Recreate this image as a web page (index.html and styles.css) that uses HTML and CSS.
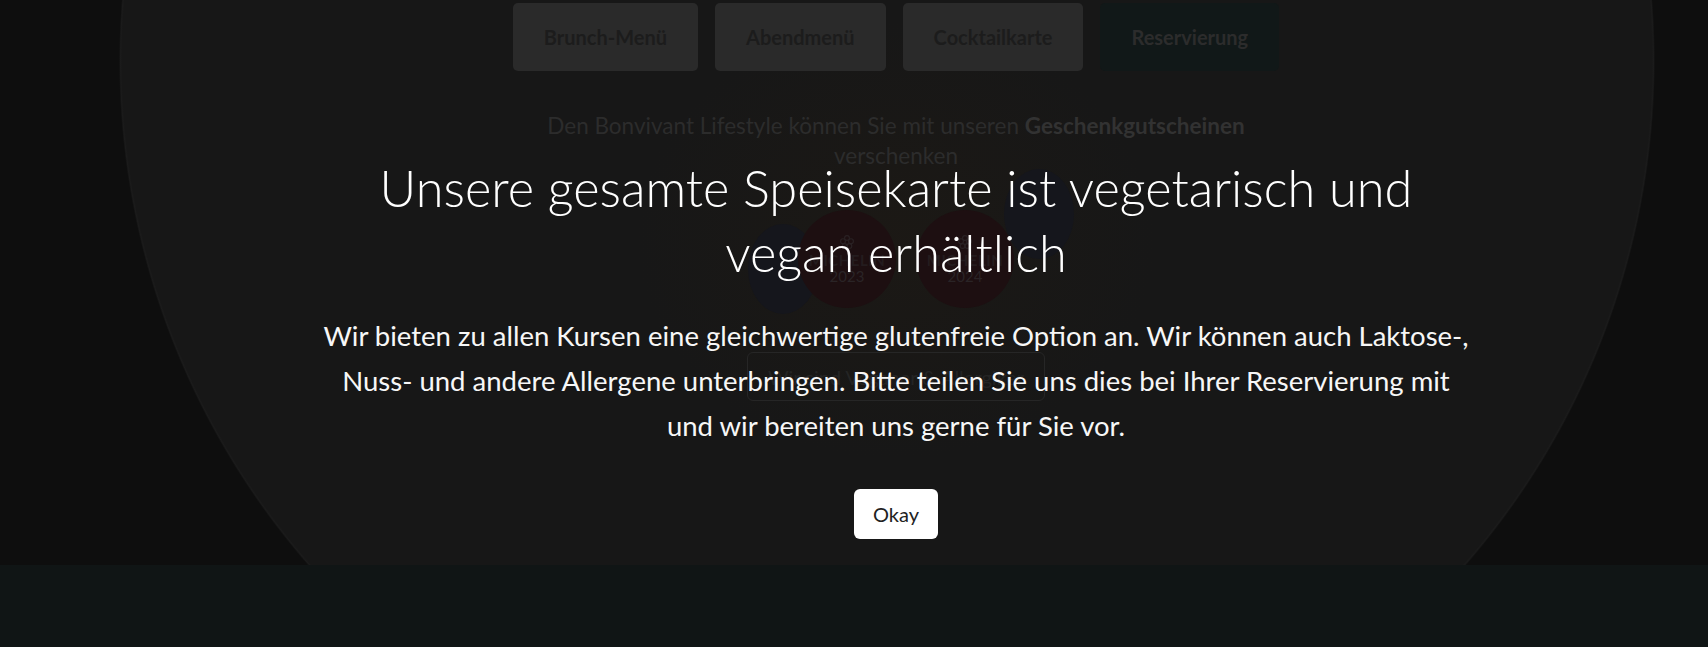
FILE: index.html
```html
<!DOCTYPE html>
<html lang="de">
<head>
<meta charset="utf-8">
<title>Bonvivant</title>
<link rel="stylesheet" href="styles.css">
</head>
<body>
<div class="page">
  <section class="hero">
    <nav class="menu-nav">
      <a class="menu-btn">Brunch-Menü</a>
      <a class="menu-btn">Abendmenü</a>
      <a class="menu-btn">Cocktailkarte</a>
      <a class="menu-btn menu-btn--accent">Reservierung</a>
    </nav>
    <p class="gift">Den Bonvivant Lifestyle können Sie mit unseren <strong>Geschenkgutscheinen</strong><br>verschenken</p>
    <div class="badges">
      <span class="blob blob--left"></span>
      <div class="badge">
        <svg class="badge-star" viewBox="0 0 20 20" width="16" height="16"><g fill="none" stroke="currentColor" stroke-width="1.4"><circle cx="10" cy="5" r="3"/><circle cx="5" cy="9" r="3"/><circle cx="15" cy="9" r="3"/><circle cx="7" cy="15" r="3"/><circle cx="13" cy="15" r="3"/></g></svg>
        <span class="badge-name">MICHELIN</span>
        <span class="badge-year">2023</span>
      </div>
      <div class="badge">
        <svg class="badge-star" viewBox="0 0 20 20" width="16" height="16"><g fill="none" stroke="currentColor" stroke-width="1.4"><circle cx="10" cy="5" r="3"/><circle cx="5" cy="9" r="3"/><circle cx="15" cy="9" r="3"/><circle cx="7" cy="15" r="3"/><circle cx="13" cy="15" r="3"/></g></svg>
        <span class="badge-name">MICHELIN</span>
        <span class="badge-year">2024</span>
      </div>
      <span class="blob blob--right"></span>
    </div>
    <div class="notice">Wir sind Veganer &amp; Allergiker</div>
  </section>
  <footer class="band"></footer>

  <div class="overlay">
    <div class="modal">
      <h2 class="modal-title">Unsere gesamte Speisekarte ist vegetarisch und vegan erhältlich</h2>
      <p class="modal-text">Wir bieten zu allen Kursen eine gleichwertige glutenfreie Option an. Wir können auch Laktose-, Nuss- und andere Allergene unterbringen. Bitte teilen Sie uns dies bei Ihrer Reservierung mit und wir bereiten uns gerne für Sie vor.</p>
      <button class="modal-btn">Okay</button>
    </div>
  </div>
</div>
</body>
</html>
```

FILE: styles.css
```css
* { box-sizing: border-box; }
html, body { margin: 0; padding: 0; }
body {
  background: #101515;
  font-family: "Lato", "Noto Sans", sans-serif;
  overflow: hidden;
}
.page {
  position: relative;
  width: 1708px;
  height: 647px;
}
.hero {
  height: 565px;
  padding: 3px 0 0 84px;
  display: flex;
  flex-direction: column;
  align-items: center;
  background:
    radial-gradient(ellipse 260px 220px at 896px 240px, rgba(38, 28, 16, 0.3), rgba(38, 28, 16, 0) 100%),
    radial-gradient(circle 768px at 887px 61px, #171717 99.6%, #1b1b1b 99.8%, #0e0e0e 100%);
  background-color: #0e0e0e;
}
.menu-nav {
  display: flex;
  gap: 17px;
}
.menu-btn {
  height: 68px;
  padding: 0 31px;
  display: flex;
  align-items: center;
  justify-content: center;
  background: #2a2a2a;
  color: #1c1c1c;
  border-radius: 5px;
  font-size: 20px;
  font-weight: 700;
}
.menu-btn--accent {
  background: #111818;
  color: #2c2c2c;
}
.gift {
  margin: 40px 0 0;
  text-align: center;
  color: #2c2c2c;
  font-size: 22.5px;
  line-height: 30px;
}
.gift strong { color: #323232; }
.badges {
  display: flex;
  align-items: center;
  gap: 20px;
  margin-top: 33px;
  padding-left: 30px;
}
.blob {
  width: 70px;
  height: 90px;
  border-radius: 50%;
  background: #15161c;
}
.blob--left { margin-right: -40px; margin-top: 20px; }
.blob--right { margin-left: -30px; margin-top: -90px; }
.badge {
  width: 98px;
  height: 98px;
  border-radius: 50%;
  background: #1d0f11;
  color: #2a2426;
  display: flex;
  flex-direction: column;
  align-items: center;
  justify-content: center;
  line-height: 1.1;
  position: relative;
}
.badge-star { color: #2a2224; margin-bottom: 2px; }
.badge-name { font-size: 15px; font-weight: 700; letter-spacing: 0.5px; color: #241c1e; }
.badge-year { font-size: 15px; }
.notice {
  margin-top: 38px;
  width: 298px;
  height: 49px;
  border: 1px solid #262626;
  border-radius: 6px;
  display: flex;
  align-items: center;
  justify-content: center;
  color: #242424;
  font-size: 20px;
}
.band {
  height: 82px;
  background: #101515;
}
.overlay {
  position: absolute;
  inset: 0;
  display: flex;
  justify-content: center;
  align-items: center;
  padding: 46px 0 0 84px;
}
.modal {
  display: flex;
  flex-direction: column;
  align-items: center;
  text-align: center;
  color: #fff;
}
.modal-title {
  margin: 0;
  width: 1100px;
  font-size: 50.5px;
  font-weight: 300;
  line-height: 65px;
}
.modal-text {
  margin: 28px 0 0;
  width: 1153px;
  font-size: 27.5px;
  line-height: 45px;
  color: #f7f7f7;
}
.modal-btn {
  margin-top: 41px;
  width: 84px;
  height: 50px;
  border: 0;
  border-radius: 6px;
  background: #fff;
  color: #222;
  font-family: inherit;
  font-size: 20px;
}
```
